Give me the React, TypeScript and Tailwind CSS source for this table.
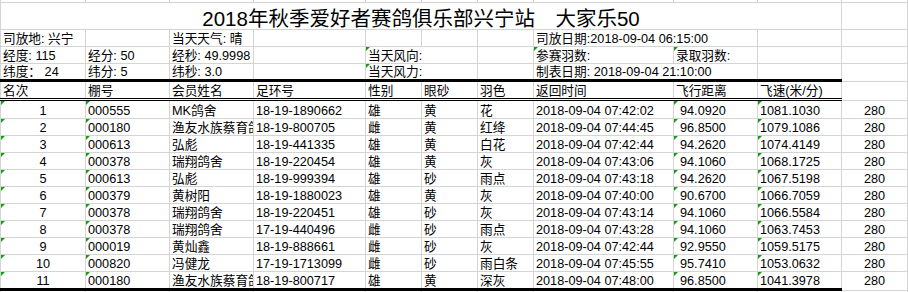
import React from 'react';
import clsx from 'clsx';

// column widths include the 1px right gridline
const colW = [
  'w-[85px]',
  'w-[84px]',
  'w-[84px]',
  'w-[112px]',
  'w-[56px]',
  'w-[56px]',
  'w-[56px]',
  'w-[140px]',
  'w-[84px]',
  'w-[84px]',
  'w-[66px]',
];

type CellProps = {
  col: number;
  children?: React.ReactNode;
  center?: boolean;
  tri?: boolean;
  open?: boolean;
  pad?: string;
};

function Cell({ col, children, center, tri, open, pad }: CellProps) {
  return (
    <div
      className={clsx(
        'relative flex h-full shrink-0 items-end',
        colW[col],
        open ? 'overflow-visible' : 'overflow-hidden border-r border-[#d4d4d4]',
        center ? 'justify-center' : pad ?? 'pl-[2px]'
      )}
    >
      {tri && (
        <span className="absolute left-0 top-0 h-[4px] w-[4px] bg-[#169c16] [clip-path:polygon(0_0,100%_0,0_100%)]" />
      )}
      {children !== undefined && <span className="whitespace-pre leading-[13px]">{children}</span>}
    </div>
  );
}

function Row({ h, children }: { h: string; children: React.ReactNode }) {
  return <div className={clsx('flex border-l border-[#d4d4d4]', h)}>{children}</div>;
}

function EmptyRow({ h }: { h: string }) {
  return (
    <Row h={h}>
      {colW.map((_, i) => (
        <Cell key={i} col={i} />
      ))}
    </Row>
  );
}

const Line = () => <div className="h-px w-[908px] bg-[#d4d4d4]" />;

const ThickLine = () => (
  <div className="flex h-[3px]">
    <div className="w-[842px] bg-black" />
    <div className="w-[66px] border-b border-r border-[#d4d4d4]" />
  </div>
);

const DoubleLine = () => (
  <div className="flex h-[3px]">
    <div className="flex w-[842px] flex-col justify-between">
      <div className="h-px bg-black" />
      <div className="h-px bg-black" />
    </div>
    <div className="w-[66px] border-b border-r border-[#d4d4d4]" />
  </div>
);

const headers = ['名次', '棚号', '会员姓名', '足环号', '性别', '眼砂', '羽色', '返回时间', '飞行距离', '飞速(米/分)'];

const results = [
  ['1', '000555', 'MK鸽舍', '18-19-1890662', '雄', '黄', '花', '2018-09-04 07:42:02', '94.0920', '1081.1030'],
  ['2', '000180', '渔友水族蔡育鸽', '18-19-800705', '雌', '黄', '红绛', '2018-09-04 07:44:45', '96.8500', '1079.1086'],
  ['3', '000613', '弘彪', '18-19-441335', '雄', '黄', '白花', '2018-09-04 07:42:44', '94.2620', '1074.4149'],
  ['4', '000378', '瑞翔鸽舍', '18-19-220454', '雄', '黄', '灰', '2018-09-04 07:43:06', '94.1060', '1068.1725'],
  ['5', '000613', '弘彪', '18-19-999394', '雄', '砂', '雨点', '2018-09-04 07:43:18', '94.2620', '1067.5198'],
  ['6', '000379', '黄树阳', '18-19-1880023', '雄', '黄', '灰', '2018-09-04 07:40:00', '90.6700', '1066.7059'],
  ['7', '000378', '瑞翔鸽舍', '18-19-220451', '雄', '砂', '灰', '2018-09-04 07:43:14', '94.1060', '1066.5584'],
  ['8', '000378', '瑞翔鸽舍', '17-19-440496', '雌', '砂', '雨点', '2018-09-04 07:43:28', '94.1060', '1063.7453'],
  ['9', '000019', '黄灿鑫', '18-19-888661', '雌', '砂', '灰', '2018-09-04 07:42:44', '92.9550', '1059.5175'],
  ['10', '000820', '冯健龙', '17-19-1713099', '雌', '砂', '雨白条', '2018-09-04 07:45:55', '95.7410', '1053.0632'],
  ['11', '000180', '渔友水族蔡育鸽', '18-19-800717', '雄', '黄', '深灰', '2018-09-04 07:48:00', '96.8500', '1041.3978'],
];

export default function App() {
  return (
    <div className="h-[292px] w-[908px] overflow-hidden bg-white font-['Liberation_Sans','Noto_Sans_CJK_SC',sans-serif] text-[12.7px] text-black">
      <EmptyRow h="h-[2px]" />
      <Line />

      {/* title, merged across the sheet */}
      <Row h="h-[26px]">
        <div className="flex h-full w-[841px] shrink-0 items-end justify-center border-r border-[#d4d4d4]">
          <span className="whitespace-pre text-[20.5px] leading-[21px]">2018年秋季爱好者赛鸽俱乐部兴宁站　大家乐50</span>
        </div>
        <Cell col={10} />
      </Row>
      <Line />

      <Row h="h-[16px]">
        <Cell col={0}>司放地: 兴宁</Cell>
        <Cell col={1} />
        <Cell col={2}>当天天气: 晴</Cell>
        <Cell col={3} />
        <Cell col={4} />
        <Cell col={5} />
        <Cell col={6} />
        <Cell col={7} open>司放日期:2018-09-04 06:15:00</Cell>
        <Cell col={8} />
        <Cell col={9} />
        <Cell col={10} />
      </Row>
      <Line />

      <Row h="h-[16px]">
        <Cell col={0}>经度: 115</Cell>
        <Cell col={1}>经分: 50</Cell>
        <Cell col={2}>经秒: 49.9998</Cell>
        <Cell col={3} />
        <Cell col={4} open tri>当天风向:</Cell>
        <Cell col={5} />
        <Cell col={6} />
        <Cell col={7} tri>参赛羽数:</Cell>
        <Cell col={8} tri>录取羽数:</Cell>
        <Cell col={9} />
        <Cell col={10} />
      </Row>
      <Line />

      <Row h="h-[15px]">
        <Cell col={0}>纬度： 24</Cell>
        <Cell col={1}>纬分: 5</Cell>
        <Cell col={2}>纬秒: 3.0</Cell>
        <Cell col={3} />
        <Cell col={4} open tri>当天风力:</Cell>
        <Cell col={5} />
        <Cell col={6} />
        <Cell col={7} open>制表日期: 2018-09-04 21:10:00</Cell>
        <Cell col={8} />
        <Cell col={9} />
        <Cell col={10} />
      </Row>
      <ThickLine />

      <Row h="h-[16px]">
        {headers.map((t, i) => (
          <Cell key={i} col={i}>
            {t}
          </Cell>
        ))}
        <Cell col={10} />
      </Row>
      <DoubleLine />

      {results.map((r, idx) => (
        <React.Fragment key={r[0]}>
          <Row h={idx === 0 ? 'h-[17px]' : 'h-[16px]'}>
            <Cell col={0} center tri>
              {r[0]}
            </Cell>
            <Cell col={1} tri>
              {r[1]}
            </Cell>
            <Cell col={2}>{r[2]}</Cell>
            <Cell col={3}>{r[3]}</Cell>
            <Cell col={4}>{r[4]}</Cell>
            <Cell col={5}>{r[5]}</Cell>
            <Cell col={6}>{r[6]}</Cell>
            <Cell col={7}>{r[7]}</Cell>
            <Cell col={8} tri pad="pl-[6px]">
              {r[8]}
            </Cell>
            <Cell col={9} tri>
              {r[9]}
            </Cell>
            <Cell col={10} center>
              280
            </Cell>
          </Row>
          {idx < results.length - 1 ? <Line /> : <ThickLine />}
        </React.Fragment>
      ))}

      <EmptyRow h="h-[10px]" />
    </div>
  );
}
